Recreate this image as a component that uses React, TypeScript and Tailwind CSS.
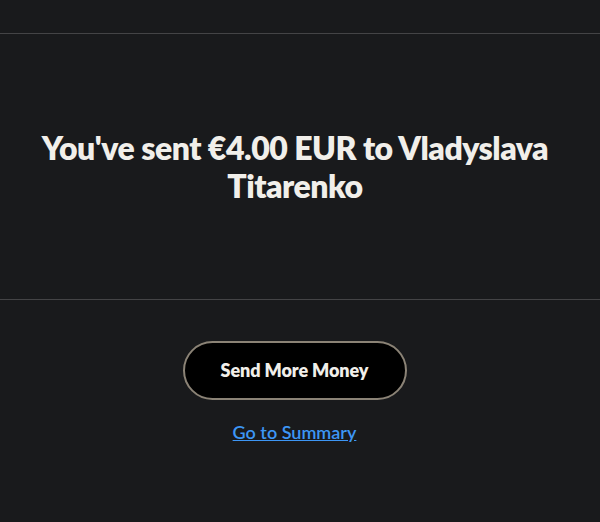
import React from "react";

export default function App() {
  return (
    <div className="min-h-[522px] w-full bg-[#191a1c] text-[#f1f0ec]" style={{ fontFamily: "Lato, 'Noto Sans', sans-serif" }}>
      <div className="h-[34px] border-b border-[#444446]" />
      <div className="flex h-[266px] items-center justify-center border-b border-[#444446] pl-6 pr-[34px]">
        <h1 className="text-center text-[32px] font-extrabold leading-[38px] tracking-[-0.5px] text-[#f1efea]">
          You've sent €4.00 EUR to Vladyslava Titarenko
        </h1>
      </div>
      <div className="flex flex-col items-center pr-[11px] pt-[41px]">
        <button className="flex h-[59px] w-[224px] items-center justify-center rounded-full border-2 border-[#8b8376] bg-black text-[18px] font-extrabold tracking-[-0.1px] text-[#f1efea]">
          Send More Money
        </button>
        <a href="#" className="mt-[19px] text-[18px] font-semibold tracking-[0px] text-[#3d96f5] underline">
          Go to Summary
        </a>
      </div>
    </div>
  );
}
